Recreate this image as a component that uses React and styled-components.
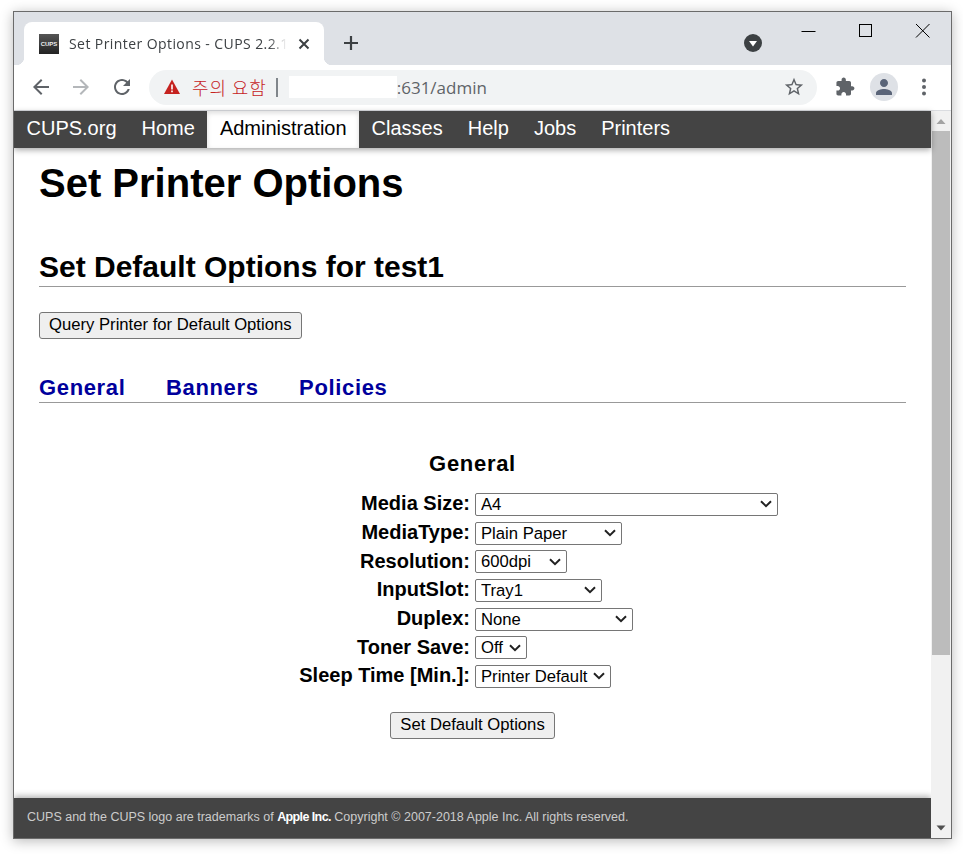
import { Fragment } from "react";
import styled, { createGlobalStyle } from "styled-components";

const GlobalStyle = createGlobalStyle`
  html, body {
    margin: 0;
    padding: 0;
    background: #fff;
    overflow: hidden;
  }
  * {
    box-sizing: border-box;
  }
`;

const chevron = encodeURIComponent(
  '<svg xmlns="http://www.w3.org/2000/svg" width="12" height="8"><path d="M1 1.2l5 5 5-5" fill="none" stroke="#222" stroke-width="2"/></svg>'
);

const Desktop = styled.div`
  width: 963px;
  height: 854px;
  padding: 11px 11px 15px 13px;
`;

const BrowserWindow = styled.div`
  display: flex;
  flex-direction: column;
  height: 828px;
  border: 1px solid #6b6b6b;
  box-shadow: 0 2px 12px rgba(0, 0, 0, 0.28);
  overflow: hidden;
  background: #fff;
`;

const TabStrip = styled.div`
  display: flex;
  align-items: flex-start;
  flex: none;
  height: 53px;
  padding: 10px 0 0 10px;
  background: #dee1e6;
`;

const Tab = styled.div`
  position: relative;
  display: flex;
  align-items: center;
  width: 300px;
  height: 43px;
  padding: 0 15px;
  background: #fff;
  border-radius: 8px 8px 0 0;
  &::before,
  &::after {
    content: "";
    position: absolute;
    bottom: 0;
    width: 8px;
    height: 8px;
  }
  &::before {
    left: -8px;
    background: radial-gradient(circle at 0 0, transparent 8px, #fff 8.5px);
  }
  &::after {
    right: -8px;
    background: radial-gradient(circle at 100% 0, transparent 8px, #fff 8.5px);
  }
`;

const Favicon = styled.div`
  display: grid;
  place-items: center;
  flex: none;
  width: 20px;
  height: 20px;
  background: linear-gradient(#555, #222);
  color: #eee;
  font: bold 6px "Liberation Sans", sans-serif;
`;

const TabTitle = styled.div`
  flex: none;
  width: 218px;
  margin-left: 10px;
  overflow: hidden;
  white-space: nowrap;
  color: #3c4043;
  font: 14px "Open Sans", sans-serif;
  letter-spacing: 0.42px;
  -webkit-mask-image: linear-gradient(to right, #000 200px, transparent 218px);
  mask-image: linear-gradient(to right, #000 200px, transparent 218px);
`;

const TabClose = styled.svg`
  flex: none;
  width: 14px;
  height: 14px;
  margin-left: 10px;
`;

const NewTab = styled.svg`
  flex: none;
  width: 18px;
  height: 18px;
  margin: 12px 0 0 18px;
`;

const TabMenu = styled.svg`
  flex: none;
  width: 18px;
  height: 18px;
  margin: 12px 0 0 384px;
`;

const WindowControls = styled.div`
  display: flex;
  margin: -10px 0 0 auto;
`;

const WindowButton = styled.svg`
  width: 57px;
  height: 38px;
`;

const Toolbar = styled.div`
  display: flex;
  align-items: center;
  flex: none;
  height: 46px;
  padding: 0 0 1px 15px;
  background: #fff;
  border-bottom: 1px solid #dadce0;
`;

const ToolIcon = styled.svg`
  flex: none;
  width: 24px;
  height: 24px;
  margin: 0 ${(p) => p.$gap || 0}px 0 0;
  fill: ${(p) => p.$color || "#5f6368"};
`;

const Omnibox = styled.div`
  display: flex;
  align-items: center;
  flex: none;
  width: 668px;
  height: 35px;
  margin: 0 16px 0 15px;
  padding: 0 12px 0 14px;
  border-radius: 18px;
  background: #f1f3f4;
`;

const WarningIcon = styled.svg`
  flex: none;
  width: 18px;
  height: 18px;
`;

const WarningText = styled.span`
  margin-left: 11px;
  color: #c5221f;
  font: 300 18px "Noto Sans CJK KR", sans-serif;
  letter-spacing: 0.9px;
  white-space: nowrap;
`;

const Divider = styled.span`
  flex: none;
  width: 2px;
  height: 19px;
  margin-left: 9px;
  background: #80868b;
`;

const HiddenHost = styled.span`
  flex: none;
  width: 108px;
  height: 22px;
  margin-left: 11px;
  background: #fff;
`;

const UrlText = styled.span`
  color: #5f6368;
  font: 17px "Open Sans", sans-serif;
`;

const StarIcon = styled(ToolIcon)`
  width: 22px;
  height: 22px;
  margin-left: auto;
`;

const Avatar = styled.div`
  display: grid;
  place-items: center;
  flex: none;
  width: 28px;
  height: 28px;
  margin: 0 14px 0 13px;
  border-radius: 50%;
  background: #dee1e6;
`;

const Viewport = styled.div`
  display: flex;
  flex: 1;
  min-height: 0;
`;

const Page = styled.div`
  display: flex;
  flex-direction: column;
  flex: 1;
  min-width: 0;
  font-family: "Liberation Sans", Arial, sans-serif;
  color: #000;
`;

const NavBar = styled.nav`
  display: flex;
  flex: none;
  height: 37px;
  background: #444;
  box-shadow: 0 2px 6px rgba(0, 0, 0, 0.35);
  position: relative;
`;

const NavItem = styled.a`
  display: block;
  padding: 0 12.5px;
  font-size: 20px;
  line-height: 34px;
  color: ${(p) => (p.$active ? "#000" : "#fff")};
  background: ${(p) => (p.$active ? "#fff" : "transparent")};
  box-shadow: ${(p) => (p.$active ? "inset 0 2px 5px rgba(0, 0, 0, 0.14)" : "none")};
`;

const Content = styled.main`
  flex: 1;
  padding: 0 25px;
`;

const Title = styled.h1`
  margin: 11px 0 0;
  font-size: 40px;
  line-height: 48px;
  font-weight: bold;
`;

const Section = styled.h2`
  margin: 42px 0 0;
  padding-bottom: 1px;
  border-bottom: 1px solid #999;
  font-size: 30px;
  line-height: 36px;
  font-weight: bold;
`;

const PushButton = styled.button`
  display: block;
  height: 27px;
  padding: 0 9px 2px;
  border: 1px solid #767676;
  border-radius: 3px;
  background: #efefef;
  color: #000;
  font: 16.67px "Liberation Sans", Arial, sans-serif;
`;

const QueryButton = styled(PushButton)`
  margin-top: 25px;
`;

const TabLinks = styled.div`
  display: flex;
  gap: 40.5px;
  margin-top: 35px;
  border-bottom: 1px solid #999;
`;

const TabLink = styled.a`
  color: #00009c;
  font-size: 22px;
  line-height: 28px;
  font-weight: bold;
  letter-spacing: 0.65px;
`;

const FormTitle = styled.h3`
  margin: 48px 0 0;
  text-align: center;
  font-size: 22px;
  line-height: 26px;
  font-weight: bold;
  letter-spacing: 0.7px;
`;

const OptionGrid = styled.div`
  display: grid;
  grid-template-columns: 431px 1fr;
  grid-auto-rows: 28.7px;
  column-gap: 5px;
  align-items: center;
  margin-top: 13px;
`;

const OptionLabel = styled.label`
  padding-bottom: 1px;
  text-align: right;
  font-size: 20px;
  font-weight: bold;
`;

const OptionSelect = styled.select`
  appearance: none;
  width: ${(p) => p.$width}px;
  height: 23px;
  padding: 0 0 0 5px;
  border: 1px solid #767676;
  border-radius: 2px;
  background: #fff url("data:image/svg+xml,${chevron}") no-repeat right 5px center;
  color: #000;
  font: 16.67px "Liberation Sans", Arial, sans-serif;
`;

const SubmitButton = styled(PushButton)`
  margin: 21px auto 0;
  padding-bottom: 1px;
`;

const Footer = styled.footer`
  flex: none;
  height: 40px;
  padding-left: 13px;
  background: #444;
  box-shadow: 0 -2px 6px rgba(0, 0, 0, 0.3);
  color: #ccc;
  font-size: 12.5px;
  line-height: 38px;
  white-space: nowrap;
  strong {
    color: #fff;
    letter-spacing: -0.6px;
  }
`;

const Scrollbar = styled.div`
  display: flex;
  flex-direction: column;
  align-items: center;
  flex: none;
  width: 20px;
  background: #f1f1f1;
`;

const ScrollArrow = styled.svg`
  flex: none;
  width: 20px;
  height: 20px;
  fill: ${(p) => p.$color};
`;

const ScrollThumb = styled.div`
  flex: none;
  width: 18px;
  height: 524px;
  margin-bottom: auto;
  background: #bcbcbc;
`;

const navItems = ["CUPS.org", "Home", "Administration", "Classes", "Help", "Jobs", "Printers"];

const options = [
  { label: "Media Size:", width: 303, value: "A4", choices: ["A4", "Letter", "Legal"] },
  { label: "MediaType:", width: 147, value: "Plain Paper", choices: ["Plain Paper", "Thick Paper"] },
  { label: "Resolution:", width: 92, value: "600dpi", choices: ["600dpi", "300dpi"] },
  { label: "InputSlot:", width: 127, value: "Tray1", choices: ["Tray1", "Manual"] },
  { label: "Duplex:", width: 158, value: "None", choices: ["None", "Long Edge"] },
  { label: "Toner Save:", width: 52, value: "Off", choices: ["Off", "On"] },
  { label: "Sleep Time [Min.]:", width: 136, value: "Printer Default", choices: ["Printer Default", "5", "10"] },
];

export default function App() {
  return (
    <Desktop>
      <GlobalStyle />
      <BrowserWindow>
        <TabStrip>
          <Tab>
            <Favicon>CUPS</Favicon>
            <TabTitle>Set Printer Options - CUPS 2.2.1</TabTitle>
            <TabClose viewBox="0 0 14 14">
              <path d="M2.5 2.5l9 9M11.5 2.5l-9 9" stroke="#3c4043" strokeWidth="2" fill="none" />
            </TabClose>
          </Tab>
          <NewTab viewBox="0 0 18 18">
            <path d="M9 2v14M2 9h14" stroke="#3c4043" strokeWidth="2.2" fill="none" />
          </NewTab>
          <TabMenu viewBox="0 0 18 18">
            <circle cx="9" cy="9" r="9" fill="#3c4043" />
            <path d="M5 7h8l-4 5.5z" fill="#fff" />
          </TabMenu>
          <WindowControls>
            <WindowButton viewBox="0 0 57 38">
              <path d="M21.5 19.5h14" stroke="#000" fill="none" />
            </WindowButton>
            <WindowButton viewBox="0 0 57 38">
              <rect x="22.5" y="12.5" width="12" height="12" stroke="#000" fill="none" />
            </WindowButton>
            <WindowButton viewBox="0 0 57 38">
              <path d="M22 12l13.5 13.5M35.5 12L22 25.5" stroke="#000" fill="none" />
            </WindowButton>
          </WindowControls>
        </TabStrip>
        <Toolbar>
          <ToolIcon $gap={16} viewBox="0 0 24 24">
            <path d="M20 11H7.83l5.59-5.59L12 4l-8 8 8 8 1.41-1.41L7.83 13H20v-2z" />
          </ToolIcon>
          <ToolIcon $gap={17} $color="#b4b7ba" viewBox="0 0 24 24">
            <path d="M12 4l-1.41 1.41L16.17 11H4v2h12.17l-5.58 5.59L12 20l8-8z" />
          </ToolIcon>
          <ToolIcon viewBox="0 0 24 24">
            <path d="M17.65 6.35C16.2 4.9 14.21 4 12 4c-4.42 0-7.99 3.58-7.99 8s3.57 8 7.99 8c3.73 0 6.84-2.55 7.73-6h-2.08c-.82 2.33-3.04 4-5.65 4-3.31 0-6-2.69-6-6s2.69-6 6-6c1.66 0 3.14.69 4.22 1.78L13 11h7V4l-2.35 2.35z" />
          </ToolIcon>
          <Omnibox>
            <WarningIcon viewBox="0 0 18 18">
              <path d="M9 1.5L17 16H1z" fill="#c5221f" />
              <path d="M8.2 6.5h1.6v5H8.2zM8.2 12.6h1.6v1.6H8.2z" fill="#fff" />
            </WarningIcon>
            <WarningText>주의 요함</WarningText>
            <Divider />
            <HiddenHost />
            <UrlText>:631/admin</UrlText>
            <StarIcon viewBox="0 0 24 24">
              <path d="M22 9.24l-7.19-.62L12 2 9.19 8.63 2 9.24l5.46 4.73L5.82 21 12 17.27 18.18 21l-1.63-7.03L22 9.24zM12 15.4l-3.76 2.27 1-4.28-3.32-2.88 4.38-.38L12 6.1l1.71 4.04 4.38.38-3.32 2.88 1 4.28L12 15.4z" />
            </StarIcon>
          </Omnibox>
          <ToolIcon viewBox="-2 -2 28 28">
            <path d="M20.5 11H19V7c0-1.1-.9-2-2-2h-4V3.5C13 2.12 11.88 1 10.5 1S8 2.12 8 3.5V5H4c-1.1 0-1.99.9-1.99 2v3.8H3.5c1.49 0 2.7 1.21 2.7 2.7s-1.21 2.7-2.7 2.7H2V20c0 1.1.9 2 2 2h3.8v-1.5c0-1.49 1.21-2.7 2.7-2.7 1.49 0 2.7 1.21 2.7 2.7V22H17c1.1 0 2-.9 2-2v-4h1.5c1.38 0 2.5-1.12 2.5-2.5S21.88 11 20.5 11z" />
          </ToolIcon>
          <Avatar>
            <ToolIcon $color="#5a6478" viewBox="0 0 24 24">
              <path d="M12 12c2.21 0 4-1.79 4-4s-1.79-4-4-4-4 1.79-4 4 1.79 4 4 4zm0 2c-2.67 0-8 1.34-8 4v2h16v-2c0-2.66-5.33-4-8-4z" />
            </ToolIcon>
          </Avatar>
          <ToolIcon viewBox="0 0 24 24">
            <circle cx="12" cy="5.5" r="2" />
            <circle cx="12" cy="12" r="2" />
            <circle cx="12" cy="18.5" r="2" />
          </ToolIcon>
        </Toolbar>
        <Viewport>
          <Page>
            <NavBar>
              {navItems.map((item) => (
                <NavItem key={item} $active={item === "Administration"}>
                  {item}
                </NavItem>
              ))}
            </NavBar>
            <Content>
              <Title>Set Printer Options</Title>
              <Section>Set Default Options for test1</Section>
              <QueryButton>Query Printer for Default Options</QueryButton>
              <TabLinks>
                <TabLink>General</TabLink>
                <TabLink>Banners</TabLink>
                <TabLink>Policies</TabLink>
              </TabLinks>
              <FormTitle>General</FormTitle>
              <OptionGrid>
                {options.map(({ label, width, value, choices }) => (
                  <Fragment key={label}>
                    <OptionLabel>{label}</OptionLabel>
                    <OptionSelect $width={width} defaultValue={value}>
                      {choices.map((choice) => (
                        <option key={choice}>{choice}</option>
                      ))}
                    </OptionSelect>
                  </Fragment>
                ))}
              </OptionGrid>
              <SubmitButton>Set Default Options</SubmitButton>
            </Content>
            <Footer>
              CUPS and the CUPS logo are trademarks of <strong>Apple Inc.</strong> Copyright © 2007-2018 Apple Inc. All rights reserved.
            </Footer>
          </Page>
          <Scrollbar>
            <ScrollArrow $color="#a3a3a3" viewBox="0 0 20 20">
              <path d="M5.5 13L10 8l4.5 5z" />
            </ScrollArrow>
            <ScrollThumb />
            <ScrollArrow $color="#505050" viewBox="0 0 20 20">
              <path d="M5.5 7.5L10 12.5l4.5-5z" />
            </ScrollArrow>
          </Scrollbar>
        </Viewport>
      </BrowserWindow>
    </Desktop>
  );
}
